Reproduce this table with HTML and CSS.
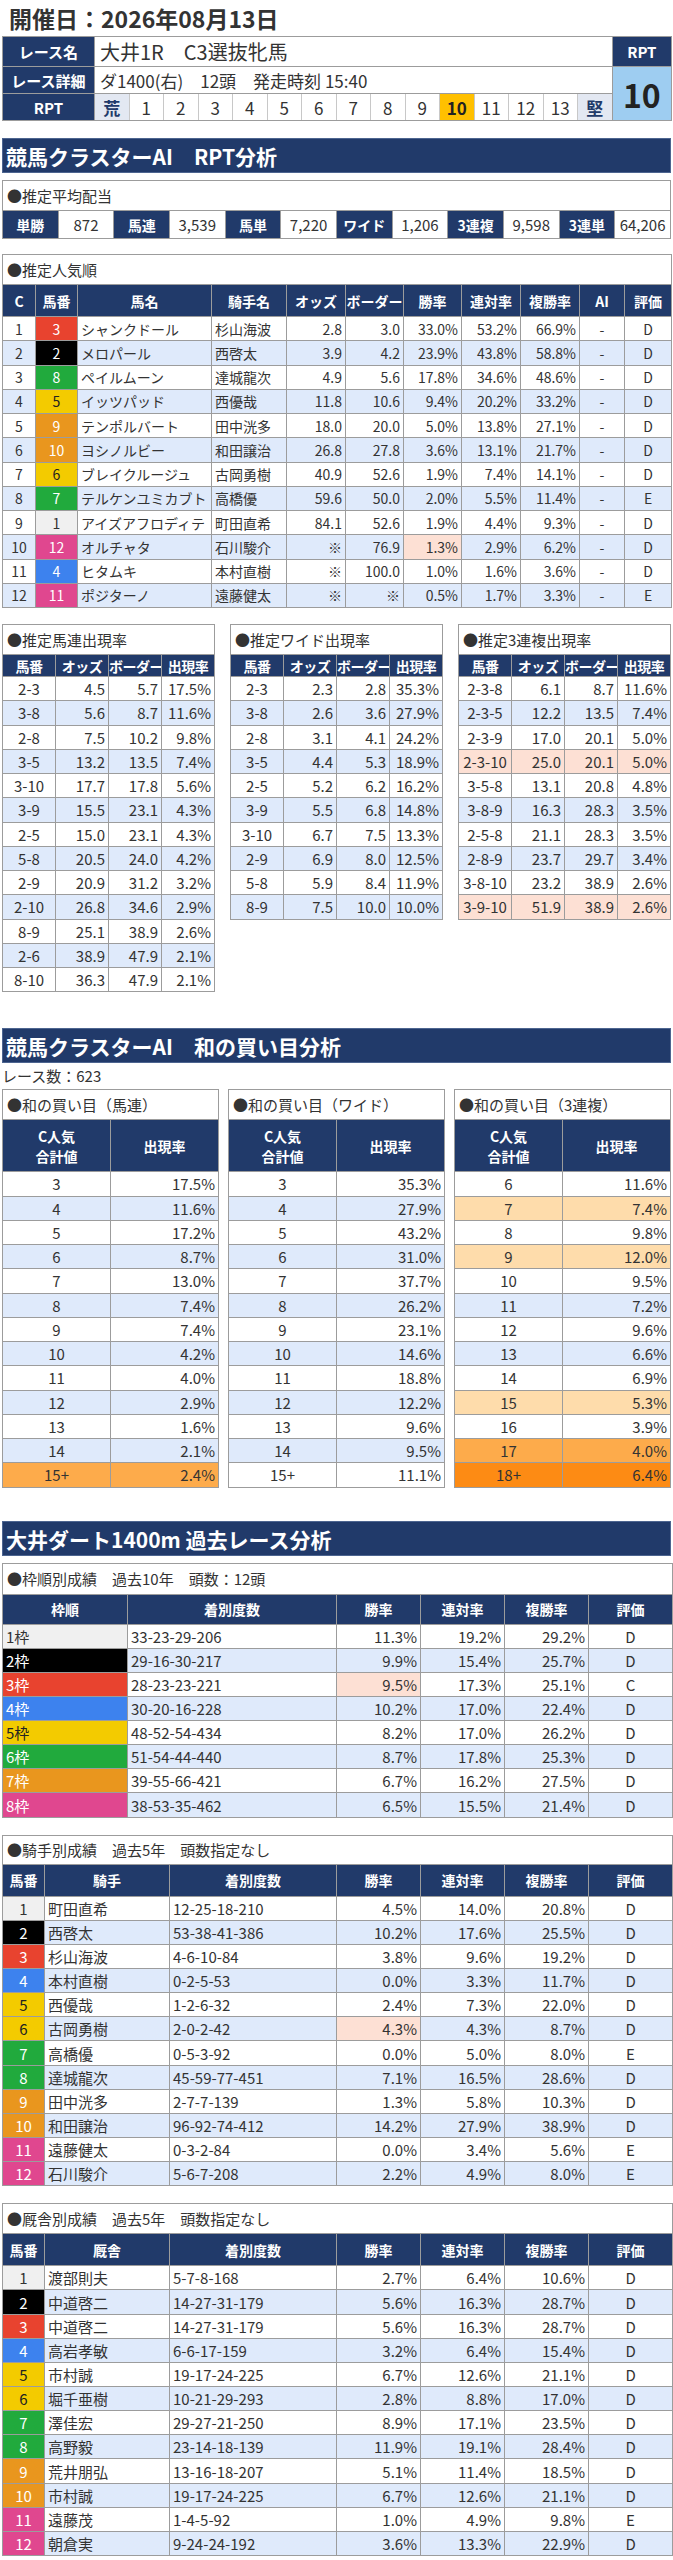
FILE: index.html
```html
<!DOCTYPE html>
<html lang="ja">
<head>
<meta charset="utf-8">
<title>RPT分析</title>
<link rel="stylesheet" href="styles.css">
</head>
<body>
<div class="date">開催日：2026年08月13日</div>

<table class="info">
<colgroup><col class="c-lab"><col span="15" class="c-sc"><col class="c-rpt"></colgroup>
<tr><th class="lab">レース名</th><td colspan="15" class="val big">大井1R　C3選抜牝馬</td><th class="rpt-h">RPT</th></tr>
<tr><th class="lab">レース詳細</th><td colspan="15" class="val">ダ1400(右)　12頭　発走時刻 15:40</td><td rowspan="2" class="rpt-v">10</td></tr>
<tr><th class="lab">RPT</th><td class="sc end">荒</td><td class="sc">1</td><td class="sc">2</td><td class="sc">3</td><td class="sc">4</td><td class="sc">5</td><td class="sc">6</td><td class="sc">7</td><td class="sc">8</td><td class="sc">9</td><td class="sc on">10</td><td class="sc">11</td><td class="sc">12</td><td class="sc">13</td><td class="sc end">堅</td></tr>
</table>

<div class="banner b1">競馬クラスターAI　RPT分析</div>

<table class="tbl pay">
<tr><td colspan="12" class="cap">●推定平均配当</td></tr>
<tr class="prow"><th class="hd">単勝</th><td>872</td><th class="hd">馬連</th><td>3,539</td><th class="hd">馬単</th><td>7,220</td><th class="hd">ワイド</th><td>1,206</td><th class="hd">3連複</th><td>9,598</td><th class="hd">3連単</th><td>64,206</td></tr>
</table>

<table class="tbl pop">
<colgroup><col class="p1"><col class="p2"><col class="p3"><col class="p4"><col class="p5"><col class="p6"><col class="p7"><col class="p8"><col class="p9"><col class="p10"><col class="p11"></colgroup>
<tr><td colspan="11" class="cap">●推定人気順</td></tr>
<tr class="hrow"><th class="hd">C</th><th class="hd">馬番</th><th class="hd">馬名</th><th class="hd">騎手名</th><th class="hd">オッズ</th><th class="hd">ボーダー</th><th class="hd">勝率</th><th class="hd">連対率</th><th class="hd">複勝率</th><th class="hd">AI</th><th class="hd">評価</th></tr>
<tr><td class="c">1</td><td class="c w3">3</td><td>シャンクドール</td><td>杉山海波</td><td class="r">2.8</td><td class="r">3.0</td><td class="r">33.0%</td><td class="r">53.2%</td><td class="r">66.9%</td><td class="c">-</td><td class="c">D</td></tr>
<tr class="alt"><td class="c">2</td><td class="c w2">2</td><td>メロパール</td><td>西啓太</td><td class="r">3.9</td><td class="r">4.2</td><td class="r">23.9%</td><td class="r">43.8%</td><td class="r">58.8%</td><td class="c">-</td><td class="c">D</td></tr>
<tr><td class="c">3</td><td class="c w6">8</td><td>ペイルムーン</td><td>達城龍次</td><td class="r">4.9</td><td class="r">5.6</td><td class="r">17.8%</td><td class="r">34.6%</td><td class="r">48.6%</td><td class="c">-</td><td class="c">D</td></tr>
<tr class="alt"><td class="c">4</td><td class="c w5">5</td><td>イッツパッド</td><td>西優哉</td><td class="r">11.8</td><td class="r">10.6</td><td class="r">9.4%</td><td class="r">20.2%</td><td class="r">33.2%</td><td class="c">-</td><td class="c">D</td></tr>
<tr><td class="c">5</td><td class="c w7">9</td><td>テンポルバート</td><td>田中洸多</td><td class="r">18.0</td><td class="r">20.0</td><td class="r">5.0%</td><td class="r">13.8%</td><td class="r">27.1%</td><td class="c">-</td><td class="c">D</td></tr>
<tr class="alt"><td class="c">6</td><td class="c w7">10</td><td>ヨシノルビー</td><td>和田譲治</td><td class="r">26.8</td><td class="r">27.8</td><td class="r">3.6%</td><td class="r">13.1%</td><td class="r">21.7%</td><td class="c">-</td><td class="c">D</td></tr>
<tr><td class="c">7</td><td class="c w5">6</td><td>ブレイクルージュ</td><td>古岡勇樹</td><td class="r">40.9</td><td class="r">52.6</td><td class="r">1.9%</td><td class="r">7.4%</td><td class="r">14.1%</td><td class="c">-</td><td class="c">D</td></tr>
<tr class="alt"><td class="c">8</td><td class="c w6">7</td><td>テルケンユミカブト</td><td>高橋優</td><td class="r">59.6</td><td class="r">50.0</td><td class="r">2.0%</td><td class="r">5.5%</td><td class="r">11.4%</td><td class="c">-</td><td class="c">E</td></tr>
<tr><td class="c">9</td><td class="c w1">1</td><td>アイズアフロディテ</td><td>町田直希</td><td class="r">84.1</td><td class="r">52.6</td><td class="r">1.9%</td><td class="r">4.4%</td><td class="r">9.3%</td><td class="c">-</td><td class="c">D</td></tr>
<tr class="alt"><td class="c">10</td><td class="c w8">12</td><td>オルチャタ</td><td>石川駿介</td><td class="r">※</td><td class="r">76.9</td><td class="r pk">1.3%</td><td class="r">2.9%</td><td class="r">6.2%</td><td class="c">-</td><td class="c">D</td></tr>
<tr><td class="c">11</td><td class="c w4">4</td><td>ヒタムキ</td><td>本村直樹</td><td class="r">※</td><td class="r">100.0</td><td class="r">1.0%</td><td class="r">1.6%</td><td class="r">3.6%</td><td class="c">-</td><td class="c">D</td></tr>
<tr class="alt"><td class="c">12</td><td class="c w8">11</td><td>ポジターノ</td><td>遠藤健太</td><td class="r">※</td><td class="r">※</td><td class="r">0.5%</td><td class="r">1.7%</td><td class="r">3.3%</td><td class="c">-</td><td class="c">E</td></tr>
</table>

<div class="grid3">
<table class="tbl sm">
<tr><td colspan="4" class="cap">●推定馬連出現率</td></tr>
<tr class="shrow"><th class="hd">馬番</th><th class="hd">オッズ</th><th class="hd">ボーダー</th><th class="hd">出現率</th></tr>
<tr><td class="c">2-3</td><td class="r">4.5</td><td class="r">5.7</td><td class="r">17.5%</td></tr>
<tr class="alt"><td class="c">3-8</td><td class="r">5.6</td><td class="r">8.7</td><td class="r">11.6%</td></tr>
<tr><td class="c">2-8</td><td class="r">7.5</td><td class="r">10.2</td><td class="r">9.8%</td></tr>
<tr class="alt"><td class="c">3-5</td><td class="r">13.2</td><td class="r">13.5</td><td class="r">7.4%</td></tr>
<tr><td class="c">3-10</td><td class="r">17.7</td><td class="r">17.8</td><td class="r">5.6%</td></tr>
<tr class="alt"><td class="c">3-9</td><td class="r">15.5</td><td class="r">23.1</td><td class="r">4.3%</td></tr>
<tr><td class="c">2-5</td><td class="r">15.0</td><td class="r">23.1</td><td class="r">4.3%</td></tr>
<tr class="alt"><td class="c">5-8</td><td class="r">20.5</td><td class="r">24.0</td><td class="r">4.2%</td></tr>
<tr><td class="c">2-9</td><td class="r">20.9</td><td class="r">31.2</td><td class="r">3.2%</td></tr>
<tr class="alt"><td class="c">2-10</td><td class="r">26.8</td><td class="r">34.6</td><td class="r">2.9%</td></tr>
<tr><td class="c">8-9</td><td class="r">25.1</td><td class="r">38.9</td><td class="r">2.6%</td></tr>
<tr class="alt"><td class="c">2-6</td><td class="r">38.9</td><td class="r">47.9</td><td class="r">2.1%</td></tr>
<tr><td class="c">8-10</td><td class="r">36.3</td><td class="r">47.9</td><td class="r">2.1%</td></tr>
</table>
<table class="tbl sm">
<tr><td colspan="4" class="cap">●推定ワイド出現率</td></tr>
<tr class="shrow"><th class="hd">馬番</th><th class="hd">オッズ</th><th class="hd">ボーダー</th><th class="hd">出現率</th></tr>
<tr><td class="c">2-3</td><td class="r">2.3</td><td class="r">2.8</td><td class="r">35.3%</td></tr>
<tr class="alt"><td class="c">3-8</td><td class="r">2.6</td><td class="r">3.6</td><td class="r">27.9%</td></tr>
<tr><td class="c">2-8</td><td class="r">3.1</td><td class="r">4.1</td><td class="r">24.2%</td></tr>
<tr class="alt"><td class="c">3-5</td><td class="r">4.4</td><td class="r">5.3</td><td class="r">18.9%</td></tr>
<tr><td class="c">2-5</td><td class="r">5.2</td><td class="r">6.2</td><td class="r">16.2%</td></tr>
<tr class="alt"><td class="c">3-9</td><td class="r">5.5</td><td class="r">6.8</td><td class="r">14.8%</td></tr>
<tr><td class="c">3-10</td><td class="r">6.7</td><td class="r">7.5</td><td class="r">13.3%</td></tr>
<tr class="alt"><td class="c">2-9</td><td class="r">6.9</td><td class="r">8.0</td><td class="r">12.5%</td></tr>
<tr><td class="c">5-8</td><td class="r">5.9</td><td class="r">8.4</td><td class="r">11.9%</td></tr>
<tr class="alt"><td class="c">8-9</td><td class="r">7.5</td><td class="r">10.0</td><td class="r">10.0%</td></tr>
</table>
<table class="tbl sm">
<tr><td colspan="4" class="cap">●推定3連複出現率</td></tr>
<tr class="shrow"><th class="hd">馬番</th><th class="hd">オッズ</th><th class="hd">ボーダー</th><th class="hd">出現率</th></tr>
<tr><td class="c">2-3-8</td><td class="r">6.1</td><td class="r">8.7</td><td class="r">11.6%</td></tr>
<tr class="alt"><td class="c">2-3-5</td><td class="r">12.2</td><td class="r">13.5</td><td class="r">7.4%</td></tr>
<tr><td class="c">2-3-9</td><td class="r">17.0</td><td class="r">20.1</td><td class="r">5.0%</td></tr>
<tr class="pkrow"><td class="c">2-3-10</td><td class="r">25.0</td><td class="r">20.1</td><td class="r">5.0%</td></tr>
<tr><td class="c">3-5-8</td><td class="r">13.1</td><td class="r">20.8</td><td class="r">4.8%</td></tr>
<tr class="alt"><td class="c">3-8-9</td><td class="r">16.3</td><td class="r">28.3</td><td class="r">3.5%</td></tr>
<tr><td class="c">2-5-8</td><td class="r">21.1</td><td class="r">28.3</td><td class="r">3.5%</td></tr>
<tr class="alt"><td class="c">2-8-9</td><td class="r">23.7</td><td class="r">29.7</td><td class="r">3.4%</td></tr>
<tr><td class="c">3-8-10</td><td class="r">23.2</td><td class="r">38.9</td><td class="r">2.6%</td></tr>
<tr class="pkrow"><td class="c">3-9-10</td><td class="r">51.9</td><td class="r">38.9</td><td class="r">2.6%</td></tr>
</table>
</div>

<div class="banner b2">競馬クラスターAI　和の買い目分析</div>
<div class="count">レース数：623</div>

<div class="grid3 g2">
<table class="tbl wa">
<tr><td colspan="2" class="cap">●和の買い目（馬連）</td></tr>
<tr class="whrow"><th class="hd">C人気<br>合計値</th><th class="hd">出現率</th></tr>
<tr><td class="c">3</td><td class="r">17.5%</td></tr>
<tr class="alt"><td class="c">4</td><td class="r">11.6%</td></tr>
<tr><td class="c">5</td><td class="r">17.2%</td></tr>
<tr class="alt"><td class="c">6</td><td class="r">8.7%</td></tr>
<tr><td class="c">7</td><td class="r">13.0%</td></tr>
<tr class="alt"><td class="c">8</td><td class="r">7.4%</td></tr>
<tr><td class="c">9</td><td class="r">7.4%</td></tr>
<tr class="alt"><td class="c">10</td><td class="r">4.2%</td></tr>
<tr><td class="c">11</td><td class="r">4.0%</td></tr>
<tr class="alt"><td class="c">12</td><td class="r">2.9%</td></tr>
<tr><td class="c">13</td><td class="r">1.6%</td></tr>
<tr class="alt"><td class="c">14</td><td class="r">2.1%</td></tr>
<tr class="o2"><td class="c">15+</td><td class="r">2.4%</td></tr>
</table>
<table class="tbl wa">
<tr><td colspan="2" class="cap">●和の買い目（ワイド）</td></tr>
<tr class="whrow"><th class="hd">C人気<br>合計値</th><th class="hd">出現率</th></tr>
<tr><td class="c">3</td><td class="r">35.3%</td></tr>
<tr class="alt"><td class="c">4</td><td class="r">27.9%</td></tr>
<tr><td class="c">5</td><td class="r">43.2%</td></tr>
<tr class="alt"><td class="c">6</td><td class="r">31.0%</td></tr>
<tr><td class="c">7</td><td class="r">37.7%</td></tr>
<tr class="alt"><td class="c">8</td><td class="r">26.2%</td></tr>
<tr><td class="c">9</td><td class="r">23.1%</td></tr>
<tr class="alt"><td class="c">10</td><td class="r">14.6%</td></tr>
<tr><td class="c">11</td><td class="r">18.8%</td></tr>
<tr class="alt"><td class="c">12</td><td class="r">12.2%</td></tr>
<tr><td class="c">13</td><td class="r">9.6%</td></tr>
<tr class="alt"><td class="c">14</td><td class="r">9.5%</td></tr>
<tr><td class="c">15+</td><td class="r">11.1%</td></tr>
</table>
<table class="tbl wa">
<tr><td colspan="2" class="cap">●和の買い目（3連複）</td></tr>
<tr class="whrow"><th class="hd">C人気<br>合計値</th><th class="hd">出現率</th></tr>
<tr><td class="c">6</td><td class="r">11.6%</td></tr>
<tr class="o1"><td class="c">7</td><td class="r">7.4%</td></tr>
<tr><td class="c">8</td><td class="r">9.8%</td></tr>
<tr class="o1"><td class="c">9</td><td class="r">12.0%</td></tr>
<tr><td class="c">10</td><td class="r">9.5%</td></tr>
<tr class="alt"><td class="c">11</td><td class="r">7.2%</td></tr>
<tr><td class="c">12</td><td class="r">9.6%</td></tr>
<tr class="alt"><td class="c">13</td><td class="r">6.6%</td></tr>
<tr><td class="c">14</td><td class="r">6.9%</td></tr>
<tr class="o1"><td class="c">15</td><td class="r">5.3%</td></tr>
<tr><td class="c">16</td><td class="r">3.9%</td></tr>
<tr class="o2"><td class="c">17</td><td class="r">4.0%</td></tr>
<tr class="o3"><td class="c">18+</td><td class="r">6.4%</td></tr>
</table>
</div>

<div class="banner b3">大井ダート1400m 過去レース分析</div>

<table class="tbl hist waku">
<colgroup><col class="k1"><col class="k2"><col class="k3"><col class="k3"><col class="k3"><col class="k3"></colgroup>
<tr><td colspan="6" class="cap">●枠順別成績　過去10年　頭数：12頭</td></tr>
<tr class="hhrow"><th class="hd">枠順</th><th class="hd">着別度数</th><th class="hd">勝率</th><th class="hd">連対率</th><th class="hd">複勝率</th><th class="hd">評価</th></tr>
<tr><td class="w1">1枠</td><td>33-23-29-206</td><td class="r">11.3%</td><td class="r">19.2%</td><td class="r">29.2%</td><td class="c">D</td></tr>
<tr class="alt"><td class="w2">2枠</td><td>29-16-30-217</td><td class="r">9.9%</td><td class="r">15.4%</td><td class="r">25.7%</td><td class="c">D</td></tr>
<tr><td class="w3">3枠</td><td>28-23-23-221</td><td class="r pk">9.5%</td><td class="r">17.3%</td><td class="r">25.1%</td><td class="c">C</td></tr>
<tr class="alt"><td class="w4">4枠</td><td>30-20-16-228</td><td class="r">10.2%</td><td class="r">17.0%</td><td class="r">22.4%</td><td class="c">D</td></tr>
<tr><td class="w5">5枠</td><td>48-52-54-434</td><td class="r">8.2%</td><td class="r">17.0%</td><td class="r">26.2%</td><td class="c">D</td></tr>
<tr class="alt"><td class="w6">6枠</td><td>51-54-44-440</td><td class="r">8.7%</td><td class="r">17.8%</td><td class="r">25.3%</td><td class="c">D</td></tr>
<tr><td class="w7">7枠</td><td>39-55-66-421</td><td class="r">6.7%</td><td class="r">16.2%</td><td class="r">27.5%</td><td class="c">D</td></tr>
<tr class="alt"><td class="w8">8枠</td><td>38-53-35-462</td><td class="r">6.5%</td><td class="r">15.5%</td><td class="r">21.4%</td><td class="c">D</td></tr>
</table>

<table class="tbl hist jock">
<colgroup><col class="j1"><col class="j2"><col class="j3"><col class="k3"><col class="k3"><col class="k3"><col class="k3"></colgroup>
<tr><td colspan="7" class="cap">●騎手別成績　過去5年　頭数指定なし</td></tr>
<tr class="hrow"><th class="hd">馬番</th><th class="hd">騎手</th><th class="hd">着別度数</th><th class="hd">勝率</th><th class="hd">連対率</th><th class="hd">複勝率</th><th class="hd">評価</th></tr>
<tr><td class="c w1">1</td><td>町田直希</td><td>12-25-18-210</td><td class="r">4.5%</td><td class="r">14.0%</td><td class="r">20.8%</td><td class="c">D</td></tr>
<tr class="alt"><td class="c w2">2</td><td>西啓太</td><td>53-38-41-386</td><td class="r">10.2%</td><td class="r">17.6%</td><td class="r">25.5%</td><td class="c">D</td></tr>
<tr><td class="c w3">3</td><td>杉山海波</td><td>4-6-10-84</td><td class="r">3.8%</td><td class="r">9.6%</td><td class="r">19.2%</td><td class="c">D</td></tr>
<tr class="alt"><td class="c w4">4</td><td>本村直樹</td><td>0-2-5-53</td><td class="r">0.0%</td><td class="r">3.3%</td><td class="r">11.7%</td><td class="c">D</td></tr>
<tr><td class="c w5">5</td><td>西優哉</td><td>1-2-6-32</td><td class="r">2.4%</td><td class="r">7.3%</td><td class="r">22.0%</td><td class="c">D</td></tr>
<tr class="alt"><td class="c w5">6</td><td>古岡勇樹</td><td>2-0-2-42</td><td class="r pk">4.3%</td><td class="r">4.3%</td><td class="r">8.7%</td><td class="c">D</td></tr>
<tr><td class="c w6">7</td><td>高橋優</td><td>0-5-3-92</td><td class="r">0.0%</td><td class="r">5.0%</td><td class="r">8.0%</td><td class="c">E</td></tr>
<tr class="alt"><td class="c w6">8</td><td>達城龍次</td><td>45-59-77-451</td><td class="r">7.1%</td><td class="r">16.5%</td><td class="r">28.6%</td><td class="c">D</td></tr>
<tr><td class="c w7">9</td><td>田中洸多</td><td>2-7-7-139</td><td class="r">1.3%</td><td class="r">5.8%</td><td class="r">10.3%</td><td class="c">D</td></tr>
<tr class="alt"><td class="c w7">10</td><td>和田譲治</td><td>96-92-74-412</td><td class="r">14.2%</td><td class="r">27.9%</td><td class="r">38.9%</td><td class="c">D</td></tr>
<tr><td class="c w8">11</td><td>遠藤健太</td><td>0-3-2-84</td><td class="r">0.0%</td><td class="r">3.4%</td><td class="r">5.6%</td><td class="c">E</td></tr>
<tr class="alt"><td class="c w8">12</td><td>石川駿介</td><td>5-6-7-208</td><td class="r">2.2%</td><td class="r">4.9%</td><td class="r">8.0%</td><td class="c">E</td></tr>
</table>

<table class="tbl hist last">
<colgroup><col class="j1"><col class="j2"><col class="j3"><col class="k3"><col class="k3"><col class="k3"><col class="k3"></colgroup>
<tr><td colspan="7" class="cap">●厩舎別成績　過去5年　頭数指定なし</td></tr>
<tr class="hrow"><th class="hd">馬番</th><th class="hd">厩舎</th><th class="hd">着別度数</th><th class="hd">勝率</th><th class="hd">連対率</th><th class="hd">複勝率</th><th class="hd">評価</th></tr>
<tr><td class="c w1">1</td><td>渡部則夫</td><td>5-7-8-168</td><td class="r">2.7%</td><td class="r">6.4%</td><td class="r">10.6%</td><td class="c">D</td></tr>
<tr class="alt"><td class="c w2">2</td><td>中道啓二</td><td>14-27-31-179</td><td class="r">5.6%</td><td class="r">16.3%</td><td class="r">28.7%</td><td class="c">D</td></tr>
<tr><td class="c w3">3</td><td>中道啓二</td><td>14-27-31-179</td><td class="r">5.6%</td><td class="r">16.3%</td><td class="r">28.7%</td><td class="c">D</td></tr>
<tr class="alt"><td class="c w4">4</td><td>高岩孝敏</td><td>6-6-17-159</td><td class="r">3.2%</td><td class="r">6.4%</td><td class="r">15.4%</td><td class="c">D</td></tr>
<tr><td class="c w5">5</td><td>市村誠</td><td>19-17-24-225</td><td class="r">6.7%</td><td class="r">12.6%</td><td class="r">21.1%</td><td class="c">D</td></tr>
<tr class="alt"><td class="c w5">6</td><td>堀千亜樹</td><td>10-21-29-293</td><td class="r">2.8%</td><td class="r">8.8%</td><td class="r">17.0%</td><td class="c">D</td></tr>
<tr><td class="c w6">7</td><td>澤佳宏</td><td>29-27-21-250</td><td class="r">8.9%</td><td class="r">17.1%</td><td class="r">23.5%</td><td class="c">D</td></tr>
<tr class="alt"><td class="c w6">8</td><td>高野毅</td><td>23-14-18-139</td><td class="r">11.9%</td><td class="r">19.1%</td><td class="r">28.4%</td><td class="c">D</td></tr>
<tr><td class="c w7">9</td><td>荒井朋弘</td><td>13-16-18-207</td><td class="r">5.1%</td><td class="r">11.4%</td><td class="r">18.5%</td><td class="c">D</td></tr>
<tr class="alt"><td class="c w7">10</td><td>市村誠</td><td>19-17-24-225</td><td class="r">6.7%</td><td class="r">12.6%</td><td class="r">21.1%</td><td class="c">D</td></tr>
<tr><td class="c w8">11</td><td>遠藤茂</td><td>1-4-5-92</td><td class="r">1.0%</td><td class="r">4.9%</td><td class="r">9.8%</td><td class="c">E</td></tr>
<tr class="alt"><td class="c w8">12</td><td>朝倉実</td><td>9-24-24-192</td><td class="r">3.6%</td><td class="r">13.3%</td><td class="r">22.9%</td><td class="c">D</td></tr>
</table>
</body>
</html>
```

FILE: styles.css
```css
* { box-sizing: border-box; }

body {
  margin: 0;
  padding: 0 2px;
  width: 673px;
  background: #fff;
  color: #333;
  font-family: "Noto Sans CJK JP", "Noto Sans", sans-serif;
}

.date {
  height: 36px;
  line-height: 36px;
  padding-left: 7px;
  font-size: 23px;
  font-weight: bold;
  color: #333;
}

table {
  width: 100%;
  border-collapse: collapse;
  table-layout: fixed;
}

td, th {
  border: 1px solid #9c9c9c;
  padding: 0 3px;
  white-space: nowrap;
  overflow: hidden;
  font-weight: normal;
}

/* race info header */
.info .c-lab { width: 92px; }
.info .c-sc { width: 34.5px; }
.info .c-rpt { width: 59.5px; }
.info td, .info th { height: 27px; padding: 0; }
.info .lab { background: #213a6a; color: #fff; font-weight: bold; font-size: 15px; text-align: center; }
.info .val { font-size: 17px; padding-left: 5px; text-align: left; }
.info .val.big { font-size: 20px; }
.info .sc { font-size: 17px; text-align: center; border-color: #c8c8c8; border-bottom-color: #9c9c9c; }
.info .sc.end { background: #e3e8f2; color: #213a6a; font-weight: bold; }
.info .sc.on { background: #ffc000; color: #222; font-weight: bold; }
.info .rpt-h { background: #213a6a; color: #fff; font-weight: bold; font-size: 15px; text-align: center; height: 25px; }
.info .rpt-v { background: #9ecdf1; color: #222; font-weight: bold; font-size: 32px; text-align: center; }

/* banners */
.banner {
  height: 35px;
  line-height: 35px;
  padding-left: 3px;
  background: #213a6a;
  color: #fff;
  font-size: 21px;
  font-weight: bold;
  border: 1px solid #4d6590;
}
.b1 { margin: 17px 0 7px; }
.b2 { margin: 36px 0 0; }
.b3 { margin: 33px 0 7px; }

.count { height: 26px; line-height: 25px; font-size: 15px; color: #333; }

/* generic data tables */
.tbl td { height: 24.25px; font-size: 14px; }
.tbl .cap { height: 30px; font-size: 15px; padding-left: 4px; background: #fff; text-align: left; }
.tbl .hd { background: #213a6a; color: #fff; font-weight: bold; font-size: 14px; text-align: center; padding: 0; }
.tbl .c { text-align: center; }
.tbl .r { text-align: right; }

.alt td { background: #dfeafb; }
.pkrow td { background: #fde0d4; }
.o1 td { background: #fedcab; }
.o2 td { background: #fdab4b; }
.o3 td { background: #fd8b14; }
.tbl .pk { background: #fde0d4; }

.tbl .w1 { background: #f0f0f0; color: #333; }
.tbl .w2 { background: #000; color: #fff; }
.tbl .w3 { background: #e8432f; color: #fff; }
.tbl .w4 { background: #3d82ee; color: #fff; }
.tbl .w5 { background: #f3cb00; color: #222; }
.tbl .w6 { background: #21aa3d; color: #fff; }
.tbl .w7 { background: #e9961e; color: #fff; }
.tbl .w8 { background: #e0478f; color: #fff; }

/* payout */
.pay { margin-bottom: 15px; }
.pay .prow td, .pay .prow th { height: 28px; font-size: 15px; text-align: center; }
.pay .prow th { font-size: 14px; }

/* popularity */
.pop { margin-bottom: 16px; }
.pop .p1 { width: 33px; }
.pop .p2 { width: 42px; }
.pop .p3 { width: 134px; }
.pop .p4 { width: 75px; }
.pop .p5 { width: 59px; }
.pop .p6 { width: 58px; }
.pop .p7 { width: 58px; }
.pop .p8 { width: 59px; }
.pop .p9 { width: 59px; }
.pop .p10 { width: 45px; }
.pop .p11 { width: 47px; }
.hrow th { height: 32px; }

/* three-up grids */
.grid3 { display: grid; grid-template-columns: repeat(3, 1fr); column-gap: 15px; align-items: start; }
.g2 { column-gap: 9px; }
.sm td { font-size: 15px; }
.shrow th { height: 22px; font-size: 12.5px; letter-spacing: -0.5px; }
.wa td { font-size: 15px; }
.whrow th { height: 52px; line-height: 20px; }

/* history tables */
.hist { margin-bottom: 17px; }
.hist td { font-size: 15px; height: 24.15px; }
.hist .k1 { width: 125px; }
.hist .k2 { width: 209px; }
.hist .k3 { width: 84px; }
.hist .j1 { width: 42px; }
.hist .j2 { width: 125px; }
.hist .j3 { width: 167px; }
.hhrow th { height: 30px; }
.waku .cap { height: 31px; }
.jock .cap { height: 29px; }
.hist.last { margin-bottom: 0; }
```
